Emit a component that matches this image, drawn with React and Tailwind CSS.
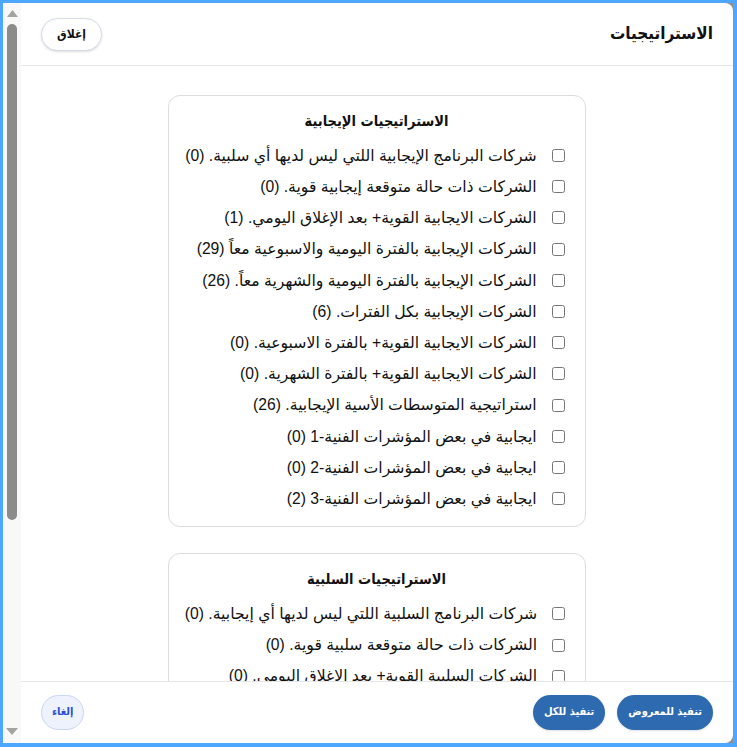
import React from "react";

const positive = [
  "شركات البرنامج الإيجابية اللتي ليس لديها أي سلبية. (0)",
  "الشركات ذات حالة متوقعة إيجابية قوية. (0)",
  "الشركات الايجابية القوية+ بعد الإغلاق اليومي. (1)",
  "الشركات الإيجابية بالفترة اليومية والاسبوعية معاً (29)",
  "الشركات الإيجابية بالفترة اليومية والشهرية معاً. (26)",
  "الشركات الإيجابية بكل الفترات. (6)",
  "الشركات الايجابية القوية+ بالفترة الاسبوعية. (0)",
  "الشركات الايجابية القوية+ بالفترة الشهرية. (0)",
  "استراتيجية المتوسطات الأسية الإيجابية. (26)",
  "ايجابية في بعض المؤشرات الفنية-1 (0)",
  "ايجابية في بعض المؤشرات الفنية-2 (0)",
  "ايجابية في بعض المؤشرات الفنية-3 (2)",
];

const negative = [
  "شركات البرنامج السلبية اللتي ليس لديها أي إيجابية. (0)",
  "الشركات ذات حالة متوقعة سلبية قوية. (0)",
  "الشركات السلبية القوية+ بعد الإغلاق اليومي. (0)",
  "الشركات السلبية بالفترة اليومية والاسبوعية معاً (0)",
  "الشركات السلبية بالفترة اليومية والشهرية معاً. (0)",
  "الشركات السلبية بكل الفترات. (0)",
];

// narrower face for the bold headings and buttons
const condensed = { fontFamily: '"DejaVu Sans Condensed", "DejaVu Sans", sans-serif' };

function StrategyGroup({ title, items }) {
  return (
    <div className="w-fit mx-auto border border-[#dcdcdc] rounded-xl pl-4 pr-[17px] pt-[13px] pb-[12px]">
      <h3 style={condensed} className="text-center font-bold text-[14.5px] leading-6 mb-[7px] text-[#111]">
        {title}
      </h3>
      <div className="flex flex-col">
        {items.map((label) => (
          <label key={label} className="flex items-center gap-3 h-[31.2px] text-[15.7px] text-[#111] whitespace-nowrap">
            <input type="checkbox" className="w-[13px] h-[13px] m-0 mx-[3px]" />
            <span>{label}</span>
          </label>
        ))}
      </div>
    </div>
  );
}

function Scrollbar() {
  return (
    <div className="w-[18px] shrink-0 bg-[#f8f8f8] flex flex-col items-center">
      <svg width="11" height="7" viewBox="0 0 11 7" className="mt-[7px]">
        <polygon points="5.5,0 11,7 0,7" fill="#a3a3a3" />
      </svg>
      <div className="mt-[7px] w-[10px] h-[496px] rounded-full bg-[#8b8b8b]" />
      <div className="flex-1" />
      <svg width="12" height="7" viewBox="0 0 12 7" className="mb-[8px]">
        <polygon points="0,0 12,0 6,7" fill="#a3a3a3" />
      </svg>
    </div>
  );
}

const App = () => {
  return (
    <div
      className="h-[747px] w-[737px] border-[#4da6ff] border-t-[3px] border-l-[3px] border-r-4 border-b-4 bg-[#8f8f8f] flex"
      style={{ fontFamily: '"Liberation Sans", "DejaVu Sans", Arial, sans-serif' }}
    >
      <Scrollbar />
      <div dir="rtl" className="flex-1 min-w-0 bg-white rounded-tr-lg rounded-br-lg flex flex-col overflow-hidden">
        <header className="h-[63px] shrink-0 border-b border-[#e6e6e6] flex items-center justify-between px-5">
          <h2 style={condensed} className="text-[17px] font-bold text-[#111]">الاستراتيجيات</h2>
          <button style={condensed} className="h-[33px] w-[61px] rounded-full bg-white border border-[#d5dbe7] shadow-sm text-xs font-bold text-[#111]">
            إغلاق
          </button>
        </header>

        <main className="flex-1 overflow-hidden pt-[29px] flex flex-col gap-[26px]">
          <StrategyGroup title="الاستراتيجيات الإيجابية" items={positive} />
          <StrategyGroup title="الاستراتيجيات السلبية" items={negative} />
        </main>

        <footer style={condensed} className="h-[62px] shrink-0 border-t border-[#e6e6e6] flex items-center justify-between px-5">
          <div className="flex items-center gap-3">
            <button className="h-[35px] px-[11px] rounded-full bg-[#2e6ab0] text-white text-[11px] font-bold shadow-sm">
              تنفيذ للمعروض
            </button>
            <button className="h-[35px] px-[11px] rounded-full bg-[#2e6ab0] text-white text-[11px] font-bold shadow-sm">
              تنفيذ للكل
            </button>
          </div>
          <button className="h-[35px] px-[10px] rounded-full bg-[#eef2fd] border border-[#c9d5f5] text-[#2b4fd8] text-[11px] font-bold">
            إلغاء
          </button>
        </footer>
      </div>
    </div>
  );
};

export default App;
